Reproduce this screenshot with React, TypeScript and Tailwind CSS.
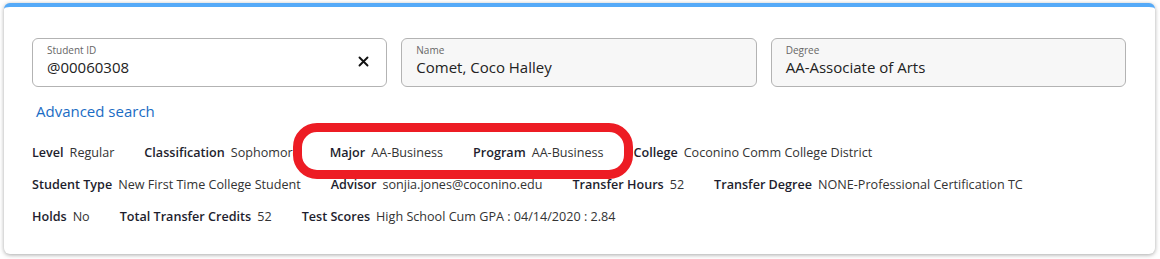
import React from 'react';

type Field = { label: string; value: string };

const rows: Field[][] = [
  [
    { label: 'Level', value: 'Regular' },
    { label: 'Classification', value: 'Sophomore' },
    { label: 'Major', value: 'AA-Business' },
    { label: 'Program', value: 'AA-Business' },
    { label: 'College', value: 'Coconino Comm College District' },
  ],
  [
    { label: 'Student Type', value: 'New First Time College Student' },
    { label: 'Advisor', value: 'sonjia.jones@coconino.edu' },
    { label: 'Transfer Hours', value: '52' },
    { label: 'Transfer Degree', value: 'NONE-Professional Certification TC' },
  ],
  [
    { label: 'Holds', value: 'No' },
    { label: 'Total Transfer Credits', value: '52' },
    { label: 'Test Scores', value: 'High School Cum GPA : 04/14/2020 : 2.84' },
  ],
];

const InputBox: React.FC<{ label: string; value: string; readOnly?: boolean; clearable?: boolean }> = ({
  label,
  value,
  readOnly,
  clearable,
}) => (
  <div
    className={`relative h-[49px] rounded-[6px] border border-[#b3b3b3] pl-[14px] pr-[16px] flex items-center ${
      readOnly ? 'bg-[#f7f7f7]' : 'bg-white'
    }`}
  >
    <div className="flex-1 flex flex-col pb-[4px]">
      <span className="text-[10px] leading-[12px] text-[#666]">{label}</span>
      <span className="text-[15px] leading-[20px] text-[#222] mt-[1px]">{value}</span>
    </div>
    {clearable && (
      <svg width="11" height="11" viewBox="0 0 11 11" className="mr-[1px] mb-[2px]">
        <path d="M1.5 1.5 L9.5 9.5 M9.5 1.5 L1.5 9.5" stroke="#111" strokeWidth="1.9" strokeLinecap="round" />
      </svg>
    )}
  </div>
);

const App: React.FC = () => {
  return (
    <div className="w-[1160px] h-[259px] bg-white pt-[3px] pl-[4px]" style={{ fontFamily: '"Open Sans", sans-serif' }}>
      <div className="relative w-[1151px] h-[251px] bg-white rounded-[6px] border-t-[4px] border-[#55aaf8] shadow-[0_1px_4px_rgba(0,0,0,0.35)] pt-[31px] pl-[28px] pr-[29px]">
        <div className="grid grid-cols-3 gap-[14px]">
          <InputBox label="Student ID" value="@00060308" clearable />
          <InputBox label="Name" value="Comet, Coco Halley" readOnly />
          <InputBox label="Degree" value="AA-Associate of Arts" readOnly />
        </div>

        <div className="mt-[14px] pl-[4px] text-[15px] leading-[20px] text-[#1a6cc4]">Advanced search</div>

        <div className="mt-[16px] flex flex-col">
          {rows.map((row, i) => (
            <div key={i} className="flex items-center h-[32px] gap-x-[30px] text-[12.6px]">
              {row.map((f) => (
                <div key={f.label} className="flex items-center gap-[6px] whitespace-nowrap">
                  <span className="font-semibold text-[#1e1e2e]">{f.label}</span>
                  <span className="text-[#333]">{f.value}</span>
                </div>
              ))}
            </div>
          ))}
        </div>

        {/* red annotation oval */}
        <div className="absolute left-[289px] top-[116px] w-[340px] h-[56px] rounded-[24px] border-[9px] border-[#ed1c24]" />
      </div>
    </div>
  );
};

export default App;
